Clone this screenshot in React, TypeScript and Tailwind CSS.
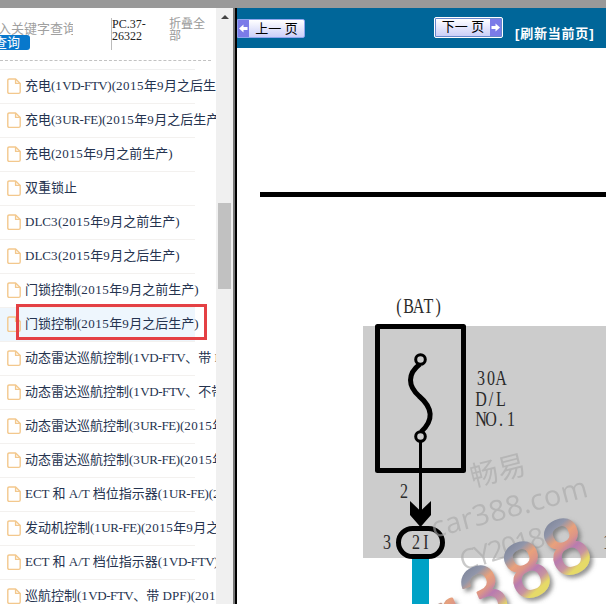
import React from "react";

const entries = [
  "充电(1VD-FTV)(2015年9月之后生产)",
  "充电(3UR-FE)(2015年9月之后生产)",
  "充电(2015年9月之前生产)",
  "双重锁止",
  "DLC3(2015年9月之前生产)",
  "DLC3(2015年9月之后生产)",
  "门锁控制(2015年9月之前生产)",
  "门锁控制(2015年9月之后生产)",
  "动态雷达巡航控制(1VD-FTV、带 DPF)",
  "动态雷达巡航控制(1VD-FTV、不带 DPF)",
  "动态雷达巡航控制(3UR-FE)(2015年9月)",
  "动态雷达巡航控制(3UR-FE)(2015年9月)",
  "ECT 和 A/T 档位指示器(1UR-FE)(2015年)",
  "发动机控制(1UR-FE)(2015年9月之后)",
  "ECT 和 A/T 档位指示器(1VD-FTV)",
  "巡航控制(1VD-FTV、带 DPF)(2015年)",
];
const selected = 7;

// Digits are set slightly loose and engine codes slightly tight.
function Label({ text }: { text: string }) {
  return (
    <span className="ml-[4px] pb-[2px] text-[13px] leading-[18px] whitespace-nowrap text-[#25334f]">
      {text.split(/(\d+|[A-Z]+-[A-Z]+)/).map((part, i) => (
        <span key={i} className={/^\d/.test(part) ? "tracking-[0.5px]" : /^[A-Z]+-/.test(part) ? "tracking-[-0.45px]" : ""}>
          {part}
        </span>
      ))}
    </span>
  );
}

function FileIcon() {
  return (
    <svg width="14" height="17" viewBox="0 0 14 17" className="shrink-0" fill="none" stroke="#f3c88d" strokeWidth="1.4" strokeLinejoin="round">
      <path d="M2.2 1H8.6L13.2 5.4V14Q13.2 15.4 11.8 15.4H2.2Q.8 15.4 .8 14V2.4Q.8 1 2.2 1Z" />
      <path d="M8.6 1V5.4H13.2" />
    </svg>
  );
}

function ArrowBlock({ flip = false }: { flip?: boolean }) {
  return (
    <span className="flex h-full w-[11px] items-center justify-center bg-[#7b7be8]">
      <svg width="9" height="9" viewBox="0 0 9 9" className={flip ? "rotate-180" : ""}>
        <path d="M0 4.5 4.5 .5V3H8.5V6H4.5V8.5Z" fill="#fff" />
      </svg>
    </span>
  );
}

function Sidebar() {
  return (
    <aside className="flex h-full w-[233px] shrink-0 bg-white">
      <div className="flex w-[216px] flex-col overflow-hidden">
        <div className="flex h-[53px] w-[211px] shrink-0 border-b border-dashed border-[#c2c2c2]">
          <div className="w-[75px] shrink-0 pt-[12px]">
            <div className="-ml-[2px] h-[15px] w-[75px] overflow-hidden text-[13px] leading-[17px] whitespace-nowrap text-[#a0a0a0]">入关键字查询</div>
            <div className="flex h-[15px] w-[30px] items-center justify-end rounded-r-[3px] bg-[#0878cc] pr-[10px] text-[13px] whitespace-nowrap text-white">查询</div>
          </div>
          <div className="ml-[36px] mt-[10px] h-[32px] w-[45px] border-l border-[#bbb] text-[12px] leading-[12px] text-[#222]">PC.37-<br />26322</div>
          <div className="ml-[13px] mt-[10px] w-[38px] text-[12px] leading-[12px] text-[#999]">折叠全部</div>
        </div>
        <ul className="mt-[8px] w-[195px] border-t border-[#f0f0f0]">
          {entries.map((label, i) => (
            <li key={i} className={`flex h-[34px] items-center border-b border-[#f3f1ef] pl-[7px] ${i === selected ? "bg-[#eef6fd]" : ""}`}>
              <FileIcon />
              <Label text={label} />
            </li>
          ))}
        </ul>
      </div>
      <div className="flex w-[17px] flex-col items-center bg-[#f0f0f0] pt-[7px]">
        <svg width="8" height="4" viewBox="0 0 8 4"><path d="M0 4 4 0 8 4Z" fill="#444" /></svg>
        <div className="mt-[184px] h-[86px] w-[13px] bg-[#c1c1c1]" />
      </div>
    </aside>
  );
}

const logo = [
  { c: "r", x: 459, y: 641 },
  { c: "3", x: 495, y: 618 },
  { c: "8", x: 537.5, y: 594 },
  { c: "8", x: 577.5, y: 571 },
];

// Condensed annotation with every character centred in a cell of one pitch.
function Note({ x, y, pitch = 10, children }: { x: number; y: number; pitch?: number; children: string }) {
  const xs = [...children].map((_, i) => ((i + 0.5) * pitch) / 0.8).join(" ");
  return <text transform={`translate(${x} ${y}) scale(0.8 1)`} x={xs} textAnchor="middle">{children}</text>;
}

function Diagram() {
  return (
    <svg width="369" height="556" viewBox="237 48 369 556" className="block">
      <defs>
        <linearGradient id="metal" x1="0" y1="0" x2="0.15" y2="1">
          <stop offset="0.2" stopColor="#7f879c" />
          <stop offset="0.32" stopColor="#9196aa" />
          <stop offset="0.44" stopColor="#e9a17b" />
          <stop offset="0.53" stopColor="#dc9588" />
          <stop offset="0.62" stopColor="#b87bb0" />
          <stop offset="0.74" stopColor="#c794a0" />
          <stop offset="0.83" stopColor="#e6da68" />
        </linearGradient>
        <filter id="drop" x="-40%" y="-40%" width="180%" height="180%">
          <feDropShadow dx="3" dy="3" stdDeviation="2" floodColor="#666" floodOpacity="0.7" />
        </filter>
      </defs>
      <path d="M260 194.5H606" stroke="#000" strokeWidth="5" />
      <rect x="363" y="326" width="243" height="232" fill="#ccc" />
      <g fill="none" stroke="#000">
        <rect x="377.5" y="326.5" width="86" height="144" strokeWidth="5" strokeLinejoin="round" />
        <path d="M420 364C407 374 408 386 419 396C433 408 434 420 421 432" strokeWidth="5" />
        <path d="M420.5 438V512" strokeWidth="3" />
        <circle cx="420.5" cy="359.5" r="4.8" strokeWidth="3" fill="#ccc" />
        <circle cx="420.5" cy="436.5" r="4.8" strokeWidth="3" fill="#ccc" />
      </g>
      <path d="M410 501 420.5 511 431 501V515L420.5 527 410 515Z" />
      <rect x="412" y="557" width="17" height="47" fill="#00a2c6" />
      <rect x="398.5" y="528.5" width="44" height="28" rx="14" fill="#ccc" stroke="#000" strokeWidth="5" />
      <g fill="#2a2a2a" fontFamily="Liberation Serif, serif" fontSize="20">
        <Note x={394} y={313} pitch={9.8}>(BAT)</Note>
        <Note x={476} y={385}>30A</Note>
        <Note x={476} y={406}>D/L</Note>
        <Note x={476} y={426}>NO.1</Note>
        <Note x={399} y={498}>2</Note>
        <Note x={382} y={549}>3</Note>
        <Note x={411} y={549}>2I</Note>
        <Note x={602} y={549}>1</Note>
      </g>
      <g fill="#a8a8a8" opacity="0.6" fontFamily="Open Sans, Noto Sans CJK SC, sans-serif">
        <text transform="translate(473 487) rotate(-14)" fontSize="28">畅易</text>
        <text transform="translate(434 538) rotate(-15)" fontSize="29" textLength="161">car388.com</text>
        <text transform="translate(463 571) rotate(-17)" fontSize="28" textLength="88">CY2018</text>
      </g>
      <g fontFamily="Liberation Sans, sans-serif" fontSize="78" textAnchor="middle">
        {logo.map(({ c, x, y }) => (
          <g key={x} filter="url(#drop)">
            <text transform={`translate(${x} ${y}) rotate(-24) scale(0.93 1)`} fill="url(#metal)" stroke="url(#metal)" strokeWidth="2.5" strokeLinejoin="round">{c}</text>
          </g>
        ))}
      </g>
    </svg>
  );
}

export default function App() {
  return (
    <div className="relative flex h-[604px] w-[606px] flex-col overflow-hidden bg-white font-['Liberation_Serif','Noto_Sans_CJK_SC',serif]">
      <div className="h-[8px] shrink-0 bg-[#999]" />
      <div className="flex min-h-0 flex-1">
        <Sidebar />
        <div className="w-[4px] shrink-0 border-r-2 border-l-2 border-l-[#777] border-r-black bg-black" />
        <main className="flex w-[369px] flex-col">
          <header className="flex h-[40px] shrink-0 items-start bg-[#006699] font-['Liberation_Sans','Noto_Sans_CJK_SC',sans-serif]">
            <button className="mt-[11px] flex h-[19px] w-[68px] items-center rounded-r-[2px] border border-[#8fa5ee] bg-linear-to-b from-white to-[#cbcff8] text-[13px] text-black">
              <ArrowBlock />
              <span className="flex-1 pb-px text-center leading-none">上一 页</span>
            </button>
            <button className="ml-[129px] mt-[9px] flex h-[21px] w-[69px] items-center rounded-[2px] border border-white bg-[#6788cc] p-px text-[13px] text-black">
              <span className="flex h-full flex-1 items-center justify-center bg-linear-to-b from-white to-[#cbcff8] pb-[2px] leading-none">下一 页</span>
              <ArrowBlock flip />
            </button>
            <span className="ml-[12px] mt-[17px] text-[13px] leading-[18px] font-bold tracking-[0.8px] whitespace-nowrap text-white">[刷新当前页]</span>
          </header>
          <Diagram />
        </main>
      </div>
      <div className="pointer-events-none absolute left-[16px] top-[304px] h-[36px] w-[191px] border-[3px] border-[#e44044]" />
    </div>
  );
}
